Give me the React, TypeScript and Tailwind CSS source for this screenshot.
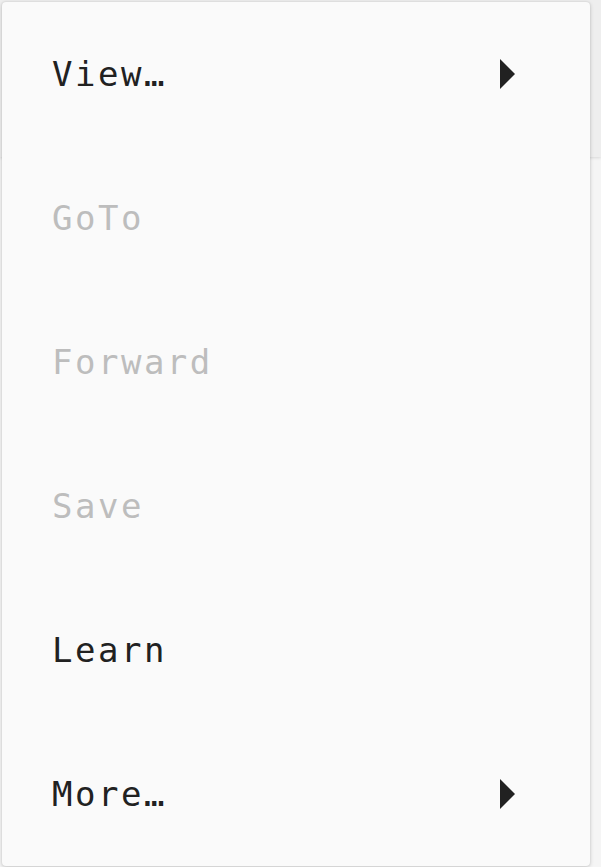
import React from 'react';

const items = [
  { label: 'View…', disabled: false, sub: true },
  { label: 'GoTo', disabled: true, sub: false },
  { label: 'Forward', disabled: true, sub: false },
  { label: 'Save', disabled: true, sub: false },
  { label: 'Learn', disabled: false, sub: false },
  { label: 'More…', disabled: false, sub: true },
];

const App = () => {
  return (
    <div className="min-h-[867px] w-[601px] bg-[#f5f5f5]">
      {/* app bar behind the menu */}
      <div className="relative">
        <div className="h-[157px] bg-[#eeeeee] shadow-[0_1px_3px_rgba(0,0,0,0.12)]" />
        <div
          className="absolute left-[2px] top-[2px] w-[588px] rounded-[4px] bg-[#fafafa] shadow-[0_1px_4px_rgba(0,0,0,0.18),0_0_2px_rgba(0,0,0,0.1)]"
          style={{ fontFamily: '"DejaVu Sans Mono", monospace' }}
        >
          {items.map((item) => (
            <div
              key={item.label}
              className="flex h-[144px] items-center justify-between pl-[50px] pr-[75px]"
            >
              <span
                className={`text-[34px] tracking-[2.5px] ${item.disabled ? 'text-[#bdbdbd]' : 'text-[#212121]'}`}
              >
                {item.label}
              </span>
              {item.sub && (
                <svg width="15" height="30" viewBox="0 0 15 30" className="block">
                  <path d="M0 0 L15 15 L0 30 Z" fill="#212121" />
                </svg>
              )}
            </div>
          ))}
        </div>
      </div>
    </div>
  );
};

export default App;
